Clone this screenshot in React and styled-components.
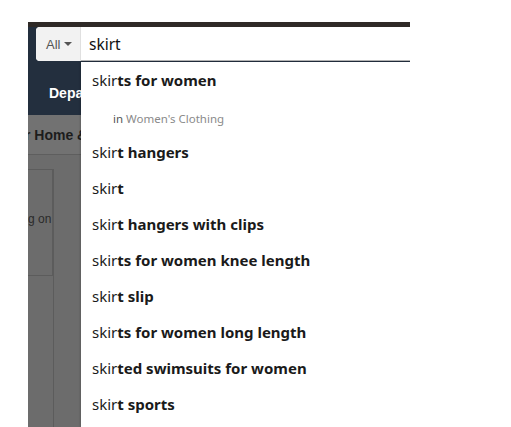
import React from 'react';
import styled, {createGlobalStyle} from 'styled-components';

const Global = createGlobalStyle`
  html, body {
    margin: 0;
    background: #fff;
  }
  body {
    font-family: "Noto Sans", "Liberation Sans", sans-serif;
  }
`;

const Frame = styled.div`
  position: relative;
  margin: 22px 0 0 28px;
  width: 382px;
  height: 405px;
  overflow: hidden;
  background: #6c6c6c;
`;

const TopStrip = styled.div`
  height: 5px;
  background: #2f2a27;
`;

const Nav = styled.div`
  background: #232f3e;
  height: 88px;
  padding-left: 8px;
`;

const SearchRow = styled.div`
  display: flex;
  height: 34px;
  background: #fff;
  border-radius: 4px 0 0 4px;
`;

const Scope = styled.div`
  display: flex;
  align-items: center;
  gap: 4px;
  width: 45px;
  box-sizing: border-box;
  padding-left: 10px;
  background: #f2f2f2;
  border-radius: 4px 0 0 4px;
  border-right: 1px solid #e0e0e0;
  font-family: "Liberation Sans", Arial, sans-serif;
  font-size: 13px;
  color: #555;
`;

const Caret = styled.span`
  width: 0;
  height: 0;
  border-left: 4px solid transparent;
  border-right: 4px solid transparent;
  border-top: 4px solid #555;
`;

const Query = styled.div`
  flex: 1;
  display: flex;
  align-items: center;
  padding-left: 8px;
  font-family: "Noto Sans", sans-serif;
  font-size: 15.5px;
  color: #111;
  border-bottom: 1px solid #b5b5b5;
`;

const NavLinks = styled.div`
  width: 45px;
  overflow: hidden;
  padding: 24px 0 0 13px;
  font-family: "Liberation Sans", Arial, sans-serif;
  font-weight: bold;
  font-size: 14px;
  color: #fff;
`;

const SubNav = styled.div`
  height: 39px;
  width: 56px;
  overflow: hidden;
  border-bottom: 1px solid #5e5e5e;
  background: #727272;
  display: flex;
  align-items: center;
  font-family: "Liberation Sans", Arial, sans-serif;
  font-weight: bold;
  font-size: 14px;
  color: #1c1c1c;
  white-space: nowrap;
  margin-left: -3px;
`;

const Body = styled.div`
  display: flex;
  padding-top: 14px;
`;

const SideBox = styled.div`
  width: 25px;
  height: 107px;
  border-top: 1px solid #5c5c5c;
  border-right: 1px solid #5c5c5c;
  border-bottom: 1px solid #5c5c5c;
  font-family: "Liberation Sans", Arial, sans-serif;
  font-size: 12px;
  color: #2a2a2a;
  white-space: nowrap;
  padding-top: 42px;
  box-sizing: border-box;
`;

const SideRule = styled.div`
  width: 1px;
  background: #5c5c5c;
  height: 260px;
`;

const Dropdown = styled.ul`
  position: absolute;
  left: 53px;
  top: 40px;
  right: 0;
  bottom: 0;
  margin: 0;
  padding: 0;
  list-style: none;
  background: #fff;
  box-shadow: -1px 0 2px rgba(0, 0, 0, 0.15);
`;

const Item = styled.li`
  height: 36px;
  display: flex;
  align-items: center;
  padding-left: 11px;
  font-size: 15px;
  color: #1a1a1a;
  font-weight: 700;
  white-space: nowrap;

  span {
    font-weight: 400;
  }
`;

const Dept = styled.li`
  height: 36px;
  display: flex;
  align-items: center;
  padding: 4px 0 0 32px;
  box-sizing: border-box;
  font-size: 11.5px;
  color: #555;

  em {
    font-style: normal;
    color: #8a8a8a;
    margin-left: 3px;
  }
`;

const suggestions = [
  {rest: 'ts for women', dept: "Women's Clothing"},
  {rest: 't hangers'},
  {rest: 't'},
  {rest: 't hangers with clips'},
  {rest: 'ts for women knee length'},
  {rest: 't slip'},
  {rest: 'ts for women long length'},
  {rest: 'ted swimsuits for women'},
  {rest: 't sports'},
];

export default function App() {
  return (
    <>
      <Global />
      <Frame>
        <TopStrip />
        <Nav>
          <SearchRow>
            <Scope>
              All <Caret />
            </Scope>
            <Query>skirt</Query>
          </SearchRow>
          <NavLinks>Depa</NavLinks>
        </Nav>
        <SubNav>r Home &amp;</SubNav>
        <Body>
          <SideBox>g on</SideBox>
          <SideRule />
        </Body>
        <Dropdown>
          {suggestions.map((s) => (
            <React.Fragment key={s.rest}>
              <Item>
                <span>skir</span>
                {s.rest}
              </Item>
              {s.dept && (
                <Dept>
                  in<em>{s.dept}</em>
                </Dept>
              )}
            </React.Fragment>
          ))}
        </Dropdown>
      </Frame>
    </>
  );
}
